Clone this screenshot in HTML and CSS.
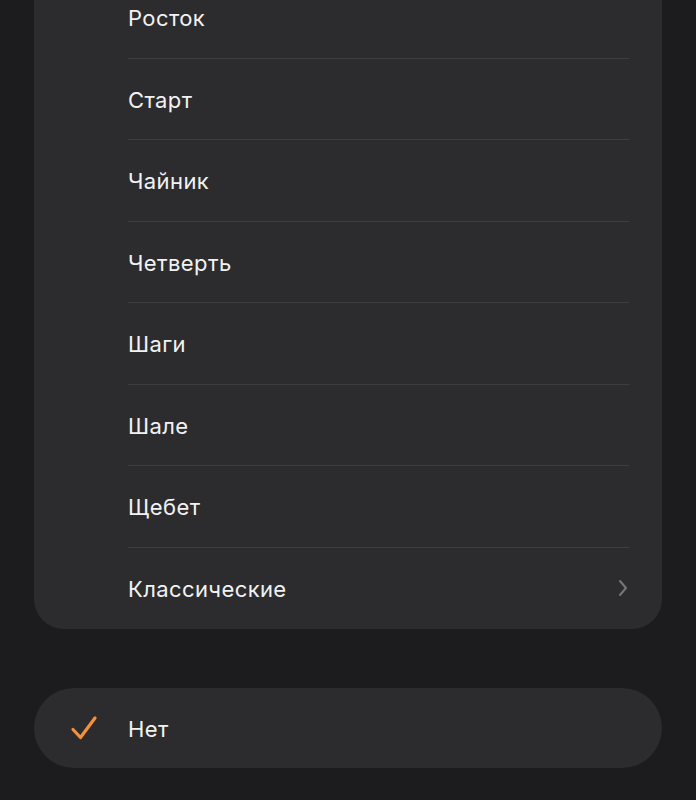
FILE: index.html
```html
<!DOCTYPE html>
<html lang="ru">
  <head>
    <meta charset="UTF-8" />
    <meta name="viewport" content="width=device-width, initial-scale=1.0" />
    <link rel="stylesheet" href="styles.css">
    <title>Мелодии</title>
  </head>
  <body>
    <div class="list">
      <div class="item"><span>Росток</span></div>
      <div class="item"><span>Старт</span></div>
      <div class="item"><span>Чайник</span></div>
      <div class="item"><span>Четверть</span></div>
      <div class="item"><span>Шаги</span></div>
      <div class="item"><span>Шале</span></div>
      <div class="item"><span>Щебет</span></div>
      <div class="item more">
        <span>Классические</span>
        <svg class="chevron" width="10" height="18" viewBox="0 0 10 18">
          <path d="M2 2 L8 9 L2 16" fill="none" stroke="#77777b" stroke-width="2" stroke-linecap="round" stroke-linejoin="round" />
        </svg>
      </div>
    </div>

    <div class="none">
      <svg class="check" width="28" height="26" viewBox="0 0 28 26">
        <path d="M3 14.5 L10.5 22.5 L25 3" fill="none" stroke="#f4913a" stroke-width="3.2" stroke-linecap="round" stroke-linejoin="round" />
      </svg>
      <span>Нет</span>
    </div>
  </body>
</html>
```

FILE: styles.css
```css
* {
  font-family: Inter, Roboto, "Noto Sans", sans-serif;
  box-sizing: border-box;
}
body {
  margin: 0;
  background: #1c1c1e;
  color: #f2f2f2;
  overflow: hidden;
}

.list {
  margin: -23px 34px 0;
  background: #2c2c2e;
  border-radius: 0 0 30px 30px;
}
.item {
  height: 81.5px;
  margin: 0 33px 0 94px;
  display: flex;
  align-items: center;
  justify-content: space-between;
  border-bottom: 1px solid #3d3d40;
  font-size: 22px;
  letter-spacing: 0.4px;
}
.item span {
  padding-top: 2px;
}
.item.more {
  border-bottom: none;
}
.chevron {
  margin-right: 1px;
}

.none {
  margin: 59px 34px 0;
  height: 80px;
  background: #2c2c2e;
  border-radius: 40px;
  display: flex;
  align-items: center;
  padding-left: 36px;
  font-size: 22px;
  letter-spacing: 0.4px;
}
.none span {
  padding-top: 2px;
}
.check {
  margin-right: 30px;
}
```
